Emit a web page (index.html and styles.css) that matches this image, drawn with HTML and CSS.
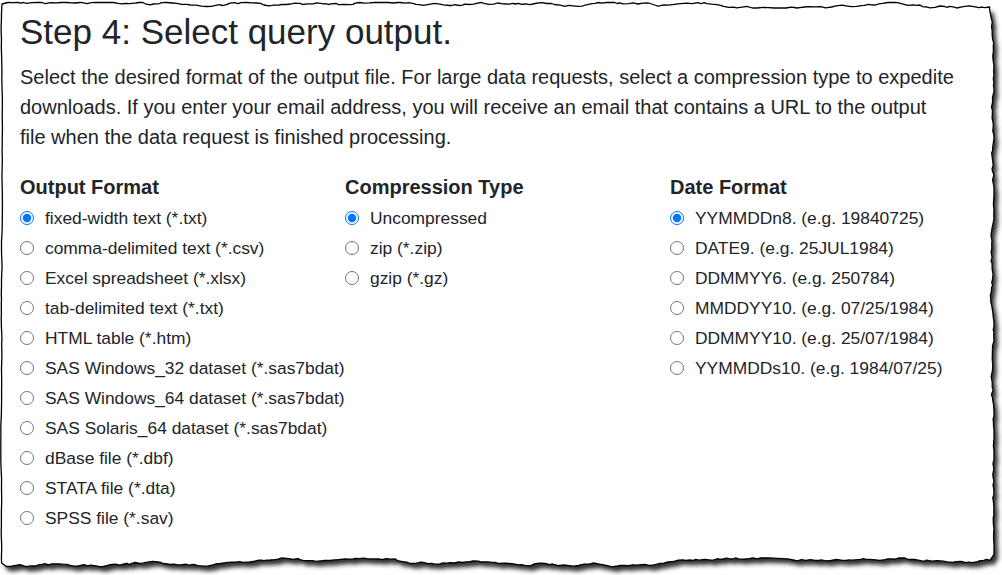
FILE: index.html
```html
<!DOCTYPE html>
<html lang="en">
<head>
<meta charset="utf-8">
<title>Step 4: Select query output.</title>
<link rel="stylesheet" href="styles.css">
</head>
<body>
<svg class="paper" id="paper" width="1002" height="575" viewBox="0 0 1002 575" aria-hidden="true">
  <defs><filter id="blur" x="-5%" y="-5%" width="110%" height="110%"><feGaussianBlur stdDeviation="2"/></filter></defs>
  <path id="shadow" fill="#333" filter="url(#blur)" transform="translate(4,5)"/>
  <path id="edge" fill="#fff" stroke="#000" stroke-width="1.3" stroke-linejoin="round"/>
</svg>
<main class="page">
  <h2 class="title">Step 4: Select query output.</h2>
  <p class="intro">Select the desired format of the output file. For large data requests, select a compression type to expedite downloads. If you enter your email address, you will receive an email that contains a URL to the output file when the data request is finished processing.</p>
  <div class="options">
    <fieldset class="group">
      <legend class="group-title">Output Format</legend>
      <label class="opt"><input type="radio" name="fmt" checked><span>fixed-width text (*.txt)</span></label>
      <label class="opt"><input type="radio" name="fmt"><span>comma-delimited text (*.csv)</span></label>
      <label class="opt"><input type="radio" name="fmt"><span>Excel spreadsheet (*.xlsx)</span></label>
      <label class="opt"><input type="radio" name="fmt"><span>tab-delimited text (*.txt)</span></label>
      <label class="opt"><input type="radio" name="fmt"><span>HTML table (*.htm)</span></label>
      <label class="opt"><input type="radio" name="fmt"><span>SAS Windows_32 dataset (*.sas7bdat)</span></label>
      <label class="opt"><input type="radio" name="fmt"><span>SAS Windows_64 dataset (*.sas7bdat)</span></label>
      <label class="opt"><input type="radio" name="fmt"><span>SAS Solaris_64 dataset (*.sas7bdat)</span></label>
      <label class="opt"><input type="radio" name="fmt"><span>dBase file (*.dbf)</span></label>
      <label class="opt"><input type="radio" name="fmt"><span>STATA file (*.dta)</span></label>
      <label class="opt"><input type="radio" name="fmt"><span>SPSS file (*.sav)</span></label>
    </fieldset>
    <fieldset class="group">
      <legend class="group-title">Compression Type</legend>
      <label class="opt"><input type="radio" name="cmp" checked><span>Uncompressed</span></label>
      <label class="opt"><input type="radio" name="cmp"><span>zip (*.zip)</span></label>
      <label class="opt"><input type="radio" name="cmp"><span>gzip (*.gz)</span></label>
    </fieldset>
    <fieldset class="group">
      <legend class="group-title">Date Format</legend>
      <label class="opt"><input type="radio" name="dt" checked><span>YYMMDDn8. (e.g. 19840725)</span></label>
      <label class="opt"><input type="radio" name="dt"><span>DATE9. (e.g. 25JUL1984)</span></label>
      <label class="opt"><input type="radio" name="dt"><span>DDMMYY6. (e.g. 250784)</span></label>
      <label class="opt"><input type="radio" name="dt"><span>MMDDYY10. (e.g. 07/25/1984)</span></label>
      <label class="opt"><input type="radio" name="dt"><span>DDMMYY10. (e.g. 25/07/1984)</span></label>
      <label class="opt"><input type="radio" name="dt"><span>YYMMDDs10. (e.g. 1984/07/25)</span></label>
    </fieldset>
  </div>
</main>
<script src="script.js"></script>
</body>
</html>
```

FILE: styles.css
```css
html, body {
  margin: 0;
  padding: 0;
  background: #fff;
}
body {
  width: 1002px;
  height: 575px;
  overflow: hidden;
  position: relative;
  font-family: "Liberation Sans", Arial, sans-serif;
  color: #212529;
}
.paper {
  position: absolute;
  left: 0;
  top: 0;
  z-index: 0;
}
.page {
  position: relative;
  z-index: 1;
  padding: 12px 0 0 20px;
}
.title {
  margin: 0;
  font-size: 35px;
  font-weight: 400;
  line-height: 40px;
}
.intro {
  width: 936px;
  margin: 10px 0 0;
  font-size: 20px;
  line-height: 30px;
}
.options {
  display: grid;
  grid-template-columns: 325px 325px 1fr;
  margin-top: 20px;
}
.group {
  border: 0;
  margin: 0;
  padding: 0;
  min-width: 0;
  display: flex;
  flex-direction: column;
}
.group-title {
  padding: 0;
  font-size: 20px;
  font-weight: 700;
  line-height: 30px;
}
.opt {
  display: flex;
  align-items: center;
  gap: 11px;
  font-size: 17.4px;
  line-height: 30px;
  padding-top: 1px;
  margin-bottom: -1px;
}
.opt input {
  width: 14px;
  height: 14px;
  margin: 0;
  accent-color: #0075ff;
}
```

FILE: script.js
```js
(function () {
  var seed = 12345;
  function r() { seed = (seed * 16807) % 2147483647; return (seed - 1) / 2147483646; }
  function walk(v, lo, hi) {
    v += (r() - 0.5) * 2.4;
    if (r() < 0.12) v += (r() - 0.5) * 3;
    return Math.max(lo, Math.min(hi, v));
  }
  var pts = [];
  var x, y, v;
  v = 5;
  for (x = 2; x < 988; x += 2 + r() * 4) { v = walk(v, 2.5, 8); pts.push([x, v]); }
  v = 990;
  for (y = 7; y < 558; y += 2 + r() * 4) { v = walk(v, 987, 994); pts.push([v, y]); }
  v = 561;
  for (x = 990; x > 3; x -= 2 + r() * 4) { v = walk(v, 558, 567); pts.push([x, v]); }
  v = 1.5;
  for (y = 563; y > 5; y -= 4 + r() * 6) { v = Math.max(0.8, Math.min(2.4, v + (r() - 0.5) * 0.6)); pts.push([v, y]); }
  var d = 'M' + pts.map(function (p) { return p[0].toFixed(1) + ' ' + p[1].toFixed(1); }).join('L') + 'Z';
  document.getElementById('edge').setAttribute('d', d);
  document.getElementById('shadow').setAttribute('d', d);
})();
```
